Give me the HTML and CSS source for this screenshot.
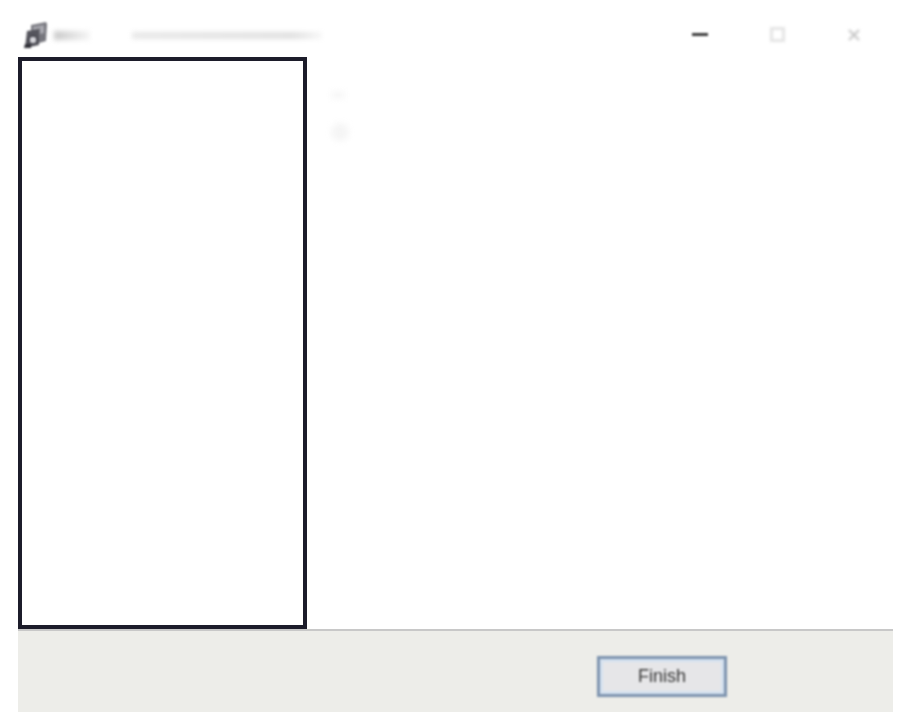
FILE: index.html
```html
<!DOCTYPE html>
<html lang="en">
<head>
<meta charset="utf-8">
<title>Setup</title>
<link rel="stylesheet" href="styles.css">
</head>
<body>
<div class="window">
  <header class="titlebar">
    <svg class="app-icon" width="28" height="30" viewBox="0 0 28 30">
      <path d="M9 5l15-3 1 2-1 17-7 2V9l-8 2z" fill="#77777e"/>
      <path d="M11 7l11-2v8l-4 1V8l-7 2z" fill="#a9a9b0"/>
      <path d="M5 11l12-2v16L3 28z" fill="#55555d"/>
      <circle cx="11" cy="20" r="4" fill="#d5d5da" stroke="#3f3f47" stroke-width="1.5"/>
      <path d="M3 24h6v4H2z" fill="#303037"/>
    </svg>
    <span class="smear smear-short"></span>
    <span class="smear smear-long"></span>
    <div class="controls">
      <span class="ctl ctl-min"></span>
      <span class="ctl ctl-max"></span>
      <svg class="ctl-close" width="14" height="14" viewBox="0 0 14 14"><path d="M2 2l10 10M12 2L2 12" stroke="#c4c4c4" stroke-width="2"/></svg>
    </div>
  </header>
  <main class="body">
    <aside class="panel"></aside>
    <div class="content">
      <span class="ghost ghost-a"></span>
      <span class="ghost ghost-b"></span>
    </div>
  </main>
  <footer class="footer">
    <button class="finish" type="button">Finish</button>
  </footer>
</div>
</body>
</html>
```
FILE: styles.css
```css
html, body {
  margin: 0;
  padding: 0;
  width: 898px;
  height: 715px;
  overflow: hidden;
  background: #ffffff;
}
.window {
  box-sizing: border-box;
  width: 875px;
  height: 712px;
  margin-left: 18px;
  display: flex;
  flex-direction: column;
  font-family: "Liberation Sans", Arial, sans-serif;
}
.titlebar {
  box-sizing: border-box;
  height: 57px;
  display: flex;
  align-items: flex-start;
  padding-top: 20px;
  padding-left: 4px;
}
.app-icon {
  flex: none;
  filter: blur(1.2px);
}
.smear {
  display: block;
}
.smear-short {
  width: 36px;
  height: 9px;
  margin: 11px 0 0 4px;
  background: linear-gradient(90deg, #c8c8c8, #e2e2e2 55%, #f6f6f6);
  filter: blur(2.5px);
}
.smear-long {
  width: 190px;
  height: 7px;
  margin: 12px 0 0 42px;
  background: linear-gradient(90deg, #e8e8e8, #e0e0e0 85%, #f8f8f8);
  filter: blur(2.5px);
}
.controls {
  margin-left: auto;
  display: flex;
  align-items: center;
  gap: 62px;
  padding: 7px 32px 0 0;
}
.ctl {
  display: block;
}
.ctl-min {
  width: 16px;
  height: 3px;
  background: #3c3c3c;
  filter: blur(1px);
}
.ctl-max {
  box-sizing: border-box;
  width: 15px;
  height: 15px;
  border: 3px solid #e4e4e4;
  filter: blur(1.8px);
}
.ctl-close {
  filter: blur(1.4px);
}
.body {
  flex: 1;
  min-height: 0;
  display: flex;
}
.panel {
  box-sizing: border-box;
  width: 289px;
  background: #ffffff;
  border: 4px solid #1c1c2a;
  filter: blur(0.7px);
}
.content {
  flex: 1;
  padding: 35px 0 0 24px;
  display: flex;
  flex-direction: column;
  gap: 25px;
}
.ghost {
  display: block;
  background: #f5f5f5;
  filter: blur(3px);
}
.ghost-a {
  width: 14px;
  height: 6px;
}
.ghost-b {
  width: 18px;
  height: 18px;
  border-radius: 50%;
}
.footer {
  box-sizing: border-box;
  height: 83px;
  flex: none;
  background: #edede9;
  border-top: 2px solid #c8c8c8;
  padding: 25px 0 0 579px;
}
.finish {
  display: block;
  box-sizing: border-box;
  width: 130px;
  height: 41px;
  padding: 0;
  background: #e6e6e8;
  border: 3px solid #7d93ae;
  box-shadow: inset 0 0 0 3px #d5e2f0;
  color: #333333;
  font-family: "Liberation Sans", Arial, sans-serif;
  font-size: 18px;
  filter: blur(1.1px);
}
```
